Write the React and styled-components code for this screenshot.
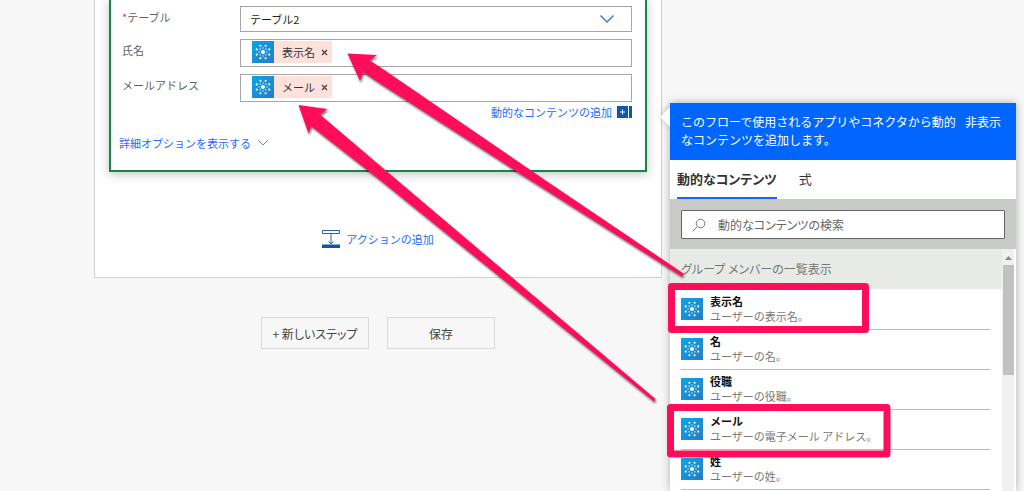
import styled, { createGlobalStyle } from 'styled-components';

const contents = [
	{ title: '表示名', text: 'ユーザーの表示名。' },
	{ title: '名', text: 'ユーザーの名。' },
	{ title: '役職', text: 'ユーザーの役職。' },
	{ title: 'メール', text: 'ユーザーの電子メール アドレス。' },
	{ title: '姓', text: 'ユーザーの姓。' },
];

const angles = [0, 45, 90, 135, 180, 225, 270, 315];

const ring = (radius, size, turn) =>
	angles.map((angle) => {
		const rad = ((angle + turn) * Math.PI) / 180;
		return (
			<circle
				key={`${radius}-${angle}`}
				cx={11 + radius * Math.cos(rad)}
				cy={11 + radius * Math.sin(rad)}
				r={size}
			/>
		);
	});

const ConnectorIcon = () => (
	<Connector>
		<svg width="22" height="22" viewBox="0 0 22 22" fill="#fff">
			<circle cx="11" cy="11" r="2" />
			<g opacity="0.7">{ring(4, 0.8, 0)}</g>
			{ring(6.8, 1.05, 22.5)}
		</svg>
	</Connector>
);

const TokenField = ({ id, label, token }) => (
	<Row>
		<Label htmlFor={id}>{label}</Label>
		<Field>
			<Token>
				<ConnectorIcon />
				<span>{token}</span>
				<Remove type="button" aria-label={`${token} を削除`}>
					<svg width="7" height="7" viewBox="0 0 7 7" stroke="#444" strokeWidth="1.3">
						<path d="M1 1l5 5M6 1l-5 5" />
					</svg>
				</Remove>
			</Token>
			<input id={id} type="text" />
		</Field>
	</Row>
);

const ActionCard = () => (
	<Card>
		<Row>
			<Label htmlFor="table">
				<em>*</em>テーブル
			</Label>
			<SelectBox>
				<select id="table">
					<option>テーブル2</option>
				</select>
				<svg width="16" height="10" viewBox="0 0 16 10" fill="none" stroke="#3d76f5" strokeWidth="1.5">
					<path d="M1.500 1.500L8 8l6.500-6.500" />
				</svg>
			</SelectBox>
		</Row>
		<TokenField id="name" label="氏名" token="表示名" />
		<TokenField id="mail" label="メールアドレス" token="メール" />
		<AddContent>
			<TextLink href="#dynamic">動的なコンテンツの追加</TextLink>
			<svg width="15" height="12" viewBox="0 0 15 12">
				<path d="M0 0h11v12H0zM12 0h3v12h-3z" fill="#0a57ad" />
				<path d="M3 6h5M5.500 3.500v5" stroke="#fff" />
			</svg>
		</AddContent>
		<Details href="#details">
			詳細オプションを表示する
			<svg width="12" height="8" viewBox="0 0 12 8" fill="none" stroke="#5c8cf7">
				<path d="M1 1l5 5 5-5" />
			</svg>
		</Details>
	</Card>
);

const ContentPanel = () => (
	<Panel>
		<Callout />
		<PanelHeader>
			<p>
				このフローで使用されるアプリやコネクタから動的
				<br />
				なコンテンツを追加します。
			</p>
			<button type="button">非表示</button>
		</PanelHeader>
		<Tabs>
			<Tab type="button" $active>
				動的なコンテンツ
			</Tab>
			<Tab type="button">式</Tab>
		</Tabs>
		<SearchArea>
			<SearchBox>
				<svg width="14" height="14" viewBox="0 0 14 14" fill="none" stroke="#777">
					<circle cx="8.500" cy="5.500" r="4.300" />
					<path d="M5.400 8.600L.7 13.300" />
				</svg>
				<input type="text" aria-label="検索" placeholder="動的なコンテンツの検索" />
			</SearchBox>
		</SearchArea>
		<Scroller>
			<Results>
				<GroupTitle>グループ メンバーの一覧表示</GroupTitle>
				<List>
					{contents.map(({ title, text }) => (
						<Item key={title}>
							<ConnectorIcon />
							<div>
								<h3>{title}</h3>
								<p>{text}</p>
							</div>
						</Item>
					))}
				</List>
			</Results>
			<Track>
				<svg width="7" height="4" viewBox="0 0 7 4" fill="#8b8b8b">
					<path d="M0 4L3.500 0 7 4z" />
				</svg>
				<Thumb />
			</Track>
		</Scroller>
	</Panel>
);

const App = () => (
	<>
		<GlobalStyle />
		<Page>
			<Designer>
				<Scope>
					<ActionCard />
					<AddAction href="#action">
						<svg width="18" height="18" viewBox="0 0 18 18" fill="none" stroke="#1f68b3">
							<path d="M.5.5h17v3H.5zM9 4v10M6.500 11.500L9 14l2.500-2.500" />
							<path d="M0 14.500h18V18H0z" fill="#0a57ad" stroke="none" />
						</svg>
						アクションの追加
					</AddAction>
				</Scope>
				<Buttons>
					<FlowButton type="button">+ 新しいステップ</FlowButton>
					<FlowButton type="button">保存</FlowButton>
				</Buttons>
			</Designer>
			<ContentPanel />
			<Marks width="1024" height="491" viewBox="0 0 1024 491">
				<g fill="#ff0d5a">
					<path d="M347.500 53.500L377 55l-7.500 5.200L380 67l165 113 138.500 93.500-1.500 3L530 180 380 83.500 363 72l-3 9z" />
					<path d="M298.500 105l29 4-7.500 5.500L397 180l258.500 219-1.500 2.500L380 180l-69-54-2.500 7.500z" />
				</g>
				<g fill="none" stroke="#ff0d5a" strokeWidth="7" strokeLinejoin="round">
					<path d="M671.500 286.500h194v43h-194z" />
					<path d="M670.500 407.500h216.500v46.500H670.500z" />
				</g>
			</Marks>
		</Page>
	</>
);

const GlobalStyle = createGlobalStyle`
	* {
		box-sizing: border-box;
	}
	body {
		margin: 0;
		background: #f7f7f7;
	}
	body, button, input, select {
		font-family: 'Noto Sans CJK JP', sans-serif;
		font-size: 11px;
	}
	button, input, select {
		padding: 0;
		border: none;
		background: none;
		color: inherit;
	}
	h2, h3, p, ul {
		margin: 0;
		padding: 0;
		font-size: inherit;
	}
	svg {
		display: block;
		flex: none;
	}
`;

const Page = styled.div`
	position: relative;
	display: flex;
	gap: 8px;
	height: 100vh;
	padding: 0 8px 0 94px;
	overflow: hidden;
`;

const Designer = styled.main`
	flex: 1;
	min-width: 0;
`;

const Scope = styled.section`
	padding: 0 14px 28px;
	border: 1px solid #d0d0d0;
	border-top: none;
	background: #fff;
`;

const Card = styled.div`
	padding: 6px 13px 17px 8px;
	border: 2px solid #15854a;
	border-top: none;
	background: #fff;
	box-shadow: 0 2px 10px rgba(0, 0, 0, 0.25);
`;

const Row = styled.div`
	display: grid;
	grid-template-columns: 118px 1fr;
	align-items: start;
	padding-left: 3px;

	& + & {
		margin-top: 7px;
	}
`;

const Label = styled.label`
	line-height: 23px;
	color: #5f5f5f;

	em {
		color: #e03c3c;
		font-style: normal;
	}
`;

const SelectBox = styled.div`
	display: flex;
	align-items: center;
	height: 26px;
	padding-right: 16px;
	border: 1px solid #a6a6a6;

	select {
		flex: 1;
		height: 24px;
		padding-left: 9px;
		appearance: none;
		color: #222;
	}
`;

const Field = styled.div`
	display: flex;
	height: 28px;
	padding: 1px 11px;
	border: 1px solid #a6a6a6;

	input {
		flex: 1;
		min-width: 0;
	}
`;

const Token = styled.span`
	display: flex;
	align-items: center;
	height: 22px;
	padding-right: 4px;
	background: #fde1da;
	color: #333;

	span {
		margin: 0 6px 0 8px;
	}
`;

const Remove = styled.button`
	display: flex;
`;

const Connector = styled.div`
	width: 22px;
	height: 22px;
	background: linear-gradient(135deg, #0aa5ea, #2a7bbf);
`;

const TextLink = styled.a`
	color: #1f6bff;
	text-decoration: none;
`;

const AddContent = styled.div`
	display: flex;
	align-items: center;
	justify-content: flex-end;
	gap: 5px;
	line-height: 20px;
`;

const Details = styled(TextLink)`
	display: flex;
	align-items: center;
	gap: 6px;
	margin-top: 11px;
	line-height: 20px;
`;

const AddAction = styled(TextLink)`
	display: flex;
	align-items: center;
	justify-content: center;
	gap: 6px;
	margin-top: 57px;
	line-height: 20px;
`;

const Buttons = styled.div`
	display: flex;
	justify-content: center;
	gap: 18px;
	margin-top: 39px;
`;

const FlowButton = styled.button`
	width: 108px;
	height: 32px;
	border: 1px solid #d9d9d9;
	font-size: 12px;
	font-feature-settings: 'palt';
	color: #444;
`;

const Panel = styled.aside`
	position: relative;
	display: flex;
	flex-direction: column;
	width: 346px;
	margin-top: 103px;
	background: #fff;
	box-shadow: 0 0 8px rgba(0, 0, 0, 0.3);
`;

// pointer towards the card
const Callout = styled.div`
	position: absolute;
	top: 7px;
	left: -7px;
	width: 14px;
	height: 14px;
	background: #fff;
	box-shadow: 0 0 6px rgba(0, 0, 0, 0.2);
	transform: rotate(45deg);
`;

const PanelHeader = styled.header`
	position: relative;
	display: flex;
	align-items: flex-start;
	justify-content: space-between;
	height: 57px;
	padding: 10px 15px 0 11px;
	background: #0066ff;
	color: #fff;
	font-size: 12px;
	line-height: 18px;
	white-space: nowrap;

	button {
		font-size: 12px;
		line-height: 18px;
	}
`;

const Tabs = styled.nav`
	display: flex;
	gap: 22px;
	height: 39px;
	padding-left: 7px;
`;

const Tab = styled.button`
	height: 39px;
	border-bottom: 2px solid ${({ $active }) => ($active ? '#1267f0' : 'transparent')};
	font-size: 13px;
	font-weight: ${({ $active }) => ($active ? 700 : 400)};
	font-feature-settings: 'palt';
	color: #333;
`;

const SearchArea = styled.div`
	padding: 11px 11px 10px;
	background: #c8cac7;
`;

const SearchBox = styled.div`
	display: flex;
	align-items: center;
	gap: 12px;
	height: 29px;
	padding: 0 10px;
	border: 1px solid #666;
	border-radius: 1px;
	background: #fff;

	input {
		flex: 1;
		outline: none;
		font-size: 12px;
		font-feature-settings: 'palt';
	}
	input::placeholder {
		color: #666;
	}
`;

const Scroller = styled.div`
	display: flex;
	flex: 1;
	min-height: 0;
	padding-right: 2px;
	overflow: hidden;
`;

const Results = styled.div`
	flex: 1;
`;

const GroupTitle = styled.h2`
	padding-left: 11px;
	background: #e8eae8;
	color: #777;
	font-size: 12px;
	font-weight: 400;
	line-height: 40px;
	font-feature-settings: 'palt';
`;

const List = styled.ul`
	padding: 1px 12px 0 11px;
	list-style: none;
`;

const Item = styled.li`
	display: flex;
	gap: 7px;
	height: 40px;
	border-bottom: 1px solid #bdbdbd;
	line-height: 15px;

	${Connector} {
		margin-top: 8px;
	}
	div + div {
		padding-top: 4px;
	}
	h3 {
		font-weight: 700;
		color: #111;
	}
	p {
		color: #777;
	}
`;

const Track = styled.div`
	display: flex;
	flex-direction: column;
	align-items: center;
	gap: 5px;
	width: 12px;
	padding-top: 7px;
	background: #f0f0f0;
`;

const Thumb = styled.div`
	width: 11px;
	height: 110px;
	background: #c1c1c1;
`;

const Marks = styled.svg`
	position: absolute;
	top: 0;
	left: 0;
	pointer-events: none;

	g:first-child {
		filter: drop-shadow(1px 2px 1px rgba(0, 0, 0, 0.55));
	}
`;

export default App;
